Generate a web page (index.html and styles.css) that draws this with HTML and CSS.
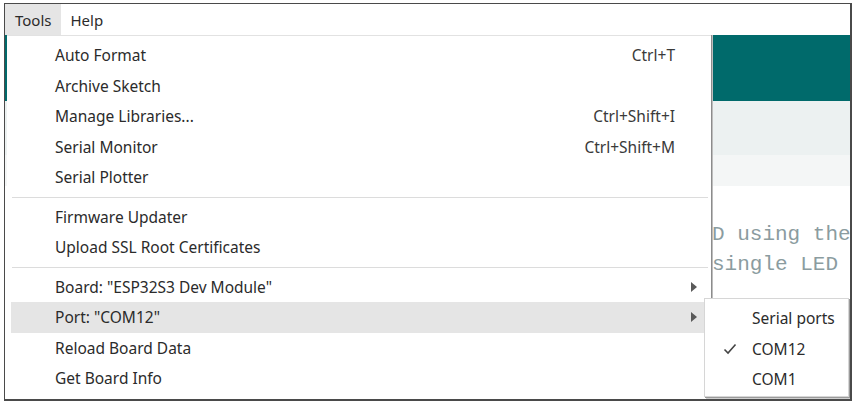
FILE: index.html
```html
<!DOCTYPE html>
<html>
<head>
<meta charset="utf-8">
<link rel="stylesheet" href="styles.css">
</head>
<body>
<div class="frame">
  <div class="menubar">
    <div class="mb-item active">Tools</div>
    <div class="mb-item">Help</div>
  </div>
  <div class="workspace">
    <div class="editor">
      <div class="toolbar"></div>
      <div class="tabs"></div>
      <div class="bread"></div>
      <div class="code">
        <div class="line">D using the</div>
        <div class="line">single LED</div>
      </div>
    </div>
    <div class="menu">
      <div class="item"><span>Auto Format</span><span class="key">Ctrl+T</span></div>
      <div class="item"><span>Archive Sketch</span></div>
      <div class="item"><span>Manage Libraries...</span><span class="key">Ctrl+Shift+I</span></div>
      <div class="item"><span>Serial Monitor</span><span class="key">Ctrl+Shift+M</span></div>
      <div class="item"><span>Serial Plotter</span></div>
      <div class="sep"></div>
      <div class="item"><span>Firmware Updater</span></div>
      <div class="item"><span>Upload SSL Root Certificates</span></div>
      <div class="sep"></div>
      <div class="item"><span>Board: "ESP32S3 Dev Module"</span><span class="arrow"></span></div>
      <div class="item hover"><span>Port: "COM12"</span><span class="arrow"></span></div>
      <div class="item"><span>Reload Board Data</span></div>
      <div class="item"><span>Get Board Info</span></div>
    </div>
    <div class="submenu">
      <div class="sub-item"><span class="check"></span><span>Serial ports</span></div>
      <div class="sub-item"><span class="check"><svg width="14" height="12" viewBox="0 0 14 12"><path d="M1.5 6.5 L5 10 L12.5 1.5" fill="none" stroke="#444" stroke-width="1.6"/></svg></span><span>COM12</span></div>
      <div class="sub-item"><span class="check"></span><span>COM1</span></div>
    </div>
  </div>
</div>
</body>
</html>
```

FILE: styles.css
```css
* { box-sizing: border-box; }
html, body { margin: 0; padding: 0; background: #fff; }
body {
  padding: 3px 0 0 4px;
  font-family: "Noto Sans", "Open Sans", sans-serif;
  font-size: 15.5px;
  color: #2b2b2b;
}
.frame {
  width: 848px;
  height: 398px;
  border: 1px solid #4a4a4a;
  border-right-width: 2px;
  border-bottom-width: 2px;
  display: flex;
  flex-direction: column;
  overflow: hidden;
}
.menubar {
  height: 31px;
  display: flex;
  align-items: stretch;
  background: #fff;
  font-size: 15px;
}
.mb-item {
  display: flex;
  align-items: center;
  padding: 0 9px 0 10px;
}
.mb-item.active { background: #e5e5e5; }
.workspace {
  flex: 1;
  position: relative;
}
.editor {
  height: 100%;
  display: flex;
  flex-direction: column;
}
.toolbar { height: 66px; background: #006a6b; }
.tabs { height: 54px; background: #ecf1f1; }
.bread { height: 31px; background: #f4f6f6; }
.code {
  padding: 34px 0 0 707px;
  font-family: "Liberation Mono", monospace;
  font-size: 21px;
  color: #8b9ca0;
}
.line { height: 30px; line-height: 30px; white-space: pre; }
.menu {
  position: absolute;
  left: 2px;
  top: 0;
  width: 704px;
  bottom: 0;
  background: #fff;
  border-top: 1px solid #e2e2e2;
  padding-top: 4px;
  box-shadow: 1px 0 0 #8c8c8c, 2px 0 0 #bdbdbd;
}
.item {
  height: 30.5px;
  display: flex;
  align-items: center;
  padding: 0 36px 0 44px;
  margin-left: 4px;
  position: relative;
}
.item .key { margin-left: auto; color: #3a3a3a; }
.item.hover { background: #e5e5e5; }
.arrow {
  position: absolute;
  right: 14px;
  top: 50%;
  margin-top: -5px;
  width: 0;
  height: 0;
  border-left: 6px solid #5a5a5a;
  border-top: 5px solid transparent;
  border-bottom: 5px solid transparent;
}
.sep {
  height: 9px;
  margin: 0 3px 0 5px;
  display: flex;
  align-items: center;
}
.sep::after {
  content: "";
  flex: 1;
  height: 1px;
  background: #dcdcdc;
}
.submenu {
  position: absolute;
  left: 699px;
  top: 263px;
  width: 145px;
  height: 99px;
  background: #fff;
  border: 1px solid #d6d6d6;
  padding-top: 4px;
  box-shadow: 1px 1px 0 #9a9a9a, 2px 2px 0 #cfcfcf;
}
.sub-item {
  height: 30.5px;
  display: flex;
  align-items: center;
}
.check {
  width: 47px;
  display: flex;
  justify-content: center;
  padding-left: 3px;
}
```
